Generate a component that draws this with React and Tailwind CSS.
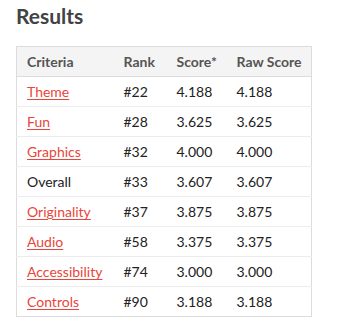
import React from 'react';

const rows = [
  { name: 'Theme', rank: '#22', score: '4.188', raw: '4.188', link: true },
  { name: 'Fun', rank: '#28', score: '3.625', raw: '3.625', link: true },
  { name: 'Graphics', rank: '#32', score: '4.000', raw: '4.000', link: true },
  { name: 'Overall', rank: '#33', score: '3.607', raw: '3.607', link: false },
  { name: 'Originality', rank: '#37', score: '3.875', raw: '3.875', link: true },
  { name: 'Audio', rank: '#58', score: '3.375', raw: '3.375', link: true },
  { name: 'Accessibility', rank: '#74', score: '3.000', raw: '3.000', link: true },
  { name: 'Controls', rank: '#90', score: '3.188', raw: '3.188', link: true },
];

export default function App() {
  return (
    <div className="bg-white w-[356px] h-[334px] px-4 pt-[2px] font-['Lato',sans-serif] text-[#222]">
      <h2 className="text-[21px] font-bold text-[#434343] leading-[28px]">Results</h2>
      <table className="mt-4 border border-[#dcdcdc] border-collapse text-[14px] w-[296px]">
        <thead>
          <tr className="bg-[#f4f4f4] border-b border-[#dcdcdc] text-[#555] font-bold">
            <th className="text-left font-bold h-[30px] pl-[10px] w-[97px]">Criteria</th>
            <th className="text-left font-bold pl-[10px] w-[53px]">Rank</th>
            <th className="text-left font-bold pl-[10px] w-[60px]">Score*</th>
            <th className="text-left font-bold pl-[10px]">Raw Score</th>
          </tr>
        </thead>
        <tbody>
          {rows.map((r) => (
            <tr key={r.name} className="border-b border-[#ececec] last:border-[#dcdcdc]">
              <td className="h-[30px] pl-[10px]">
                {r.link ? (
                  <a href="#" className="text-[#e9453a] underline underline-offset-[2px]">{r.name}</a>
                ) : (
                  r.name
                )}
              </td>
              <td className="pl-[10px]">{r.rank}</td>
              <td className="pl-[10px]">{r.score}</td>
              <td className="pl-[10px]">{r.raw}</td>
            </tr>
          ))}
        </tbody>
      </table>
    </div>
  );
}
